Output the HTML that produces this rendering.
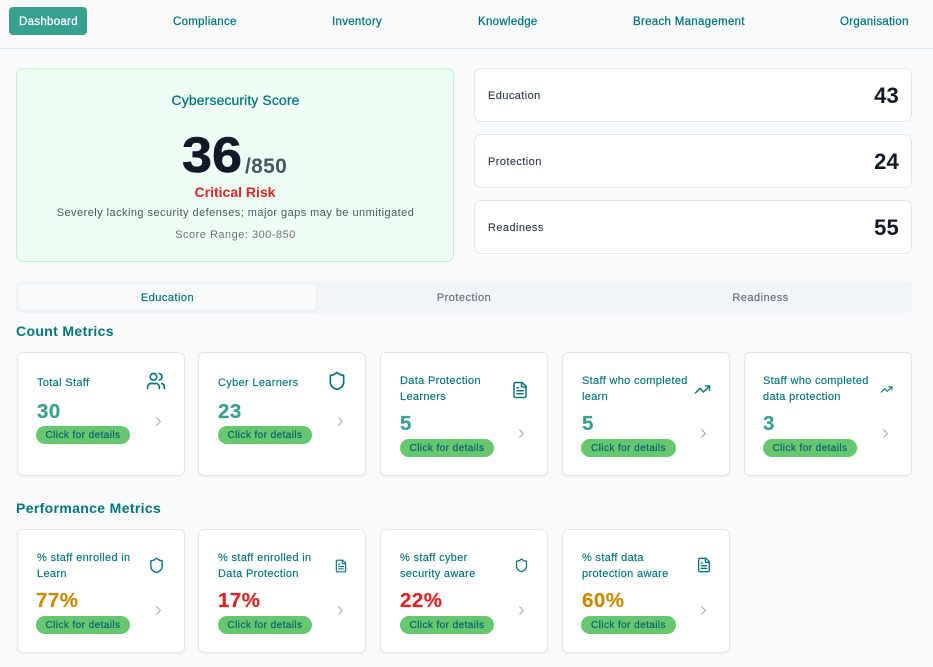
<!DOCTYPE html>
<html><head><meta charset="utf-8"><style>
*{box-sizing:border-box}
html,body{margin:0;padding:0}
body{width:933px;height:667px;position:relative;overflow:hidden;background:#f8fafc;font-family:"Liberation Sans",sans-serif;color:#04747f}
.t{position:absolute;white-space:nowrap;line-height:16px}
.c{transform:translateX(-50%)}
.nav{font-size:11.5px;letter-spacing:.3px;top:14px;-webkit-text-stroke:.25px}
.box{position:absolute;background:#fff;border:1px solid #e2e8f0;border-radius:7px}
.lab{font-size:11px;letter-spacing:.42px;color:#374151;-webkit-text-stroke:.15px}
.num{font-size:22px;font-weight:700;color:#111827;letter-spacing:.2px}
.tab{font-size:11px;letter-spacing:.48px;top:290px;color:#6b7280;-webkit-text-stroke:.2px}
.h{font-size:14px;font-weight:700;letter-spacing:.35px;left:16px}
.card{position:absolute;width:168px;height:124px;background:#fff;border:1px solid #e2e8f0;border-radius:6px;box-shadow:0 1px 2px rgba(0,0,0,.05)}
.m{font-size:11px;letter-spacing:.33px;-webkit-text-stroke:.15px}
.v{font-size:20.5px;font-weight:700;letter-spacing:.5px;color:#38a08e;-webkit-text-stroke:.2px}
.p{position:absolute;height:18px;border-radius:9px;background:#66c76e;color:#0b6173;font-size:10px;letter-spacing:.42px;line-height:19px;text-align:center;white-space:nowrap;-webkit-text-stroke:.2px}
svg.i{position:absolute;fill:none;stroke:#04747f;stroke-width:2;stroke-linecap:round;stroke-linejoin:round}
svg.ch{position:absolute;fill:none;stroke:#9ca3af;stroke-width:1.5;stroke-linecap:round;stroke-linejoin:round}
.a{color:#ca8a04}.r{color:#dc2626}
</style></head><body>
<svg width="0" height="0" style="position:absolute"><defs>
<symbol id="users" viewBox="0 0 24 24"><path d="M16 21v-2a4 4 0 0 0-4-4H6a4 4 0 0 0-4 4v2"/><circle cx="9" cy="7" r="4"/><path d="M22 21v-2a4 4 0 0 0-3-3.87"/><path d="M16 3.13a4 4 0 0 1 0 7.75"/></symbol>
<symbol id="shield" viewBox="0 0 24 24"><path d="M20 13c0 5-3.5 7.5-7.66 8.95a1 1 0 0 1-.67-.01C7.5 20.5 4 18 4 13V6a1 1 0 0 1 1-1c2 0 4.5-1.2 6.24-2.72a1.17 1.17 0 0 1 1.52 0C14.51 3.81 17 5 19 5a1 1 0 0 1 1 1z"/></symbol>
<symbol id="doc" viewBox="0 0 24 24"><path d="M15 2H6a2 2 0 0 0-2 2v16a2 2 0 0 0 2 2h12a2 2 0 0 0 2-2V7Z"/><path d="M14 2v4a2 2 0 0 0 2 2h4"/><path d="M10 9H8"/><path d="M16 13H8"/><path d="M16 17H8"/></symbol>
<symbol id="trend" viewBox="0 0 24 24"><polyline points="22 7 13.5 15.5 8.5 10.5 2 17"/><polyline points="16 7 22 7 22 13"/></symbol>
<symbol id="chev" viewBox="0 0 24 24"><path d="m9 18 6-6-6-6"/></symbol>
</defs></svg>

<div style="position:absolute;left:0;top:48px;width:933px;height:1px;background:#e2e8f0"></div>
<div style="position:absolute;left:9px;top:7px;width:78px;height:28px;background:#38a08e;border-radius:4px"></div>
<div class="t nav" style="left:19px;color:#fff">Dashboard</div>
<div class="t nav" style="left:173px">Compliance</div>
<div class="t nav" style="left:332px">Inventory</div>
<div class="t nav" style="left:478px">Knowledge</div>
<div class="t nav" style="left:633px">Breach Management</div>
<div class="t nav" style="left:840px">Organisation</div>

<div style="position:absolute;left:16px;top:68px;width:438px;height:194px;background:#f0fdf4;border:1px solid #bbf7d0;border-radius:7px"></div>
<div class="t c" style="left:235.5px;top:92px;font-size:14px;letter-spacing:.1px;-webkit-text-stroke:.25px">Cybersecurity Score</div>
<div class="t" style="left:182px;top:125px;font-size:50px;line-height:60px;font-weight:700;color:#111827;-webkit-text-stroke:.6px;transform:scaleX(1.08);transform-origin:0 0">36</div>
<div class="t" style="left:245px;top:155px;font-size:21px;line-height:24px;font-weight:700;color:#4b5563;letter-spacing:.3px">/850</div>
<div class="t c" style="left:235px;top:184px;font-size:14px;font-weight:700;color:#dc2626">Critical Risk</div>
<div class="t c" style="left:235.5px;top:205px;font-size:11px;letter-spacing:.45px;color:#4b5563">Severely lacking security defenses; major gaps may be unmitigated</div>
<div class="t c" style="left:235.5px;top:227px;font-size:11px;letter-spacing:.5px;color:#6b7280">Score Range: 300-850</div>

<div class="box" style="left:474px;top:68px;width:438px;height:54px"></div>
<div class="box" style="left:474px;top:134px;width:438px;height:54px"></div>
<div class="box" style="left:474px;top:200px;width:438px;height:54px"></div>
<div class="t lab" style="left:488px;top:88px">Education</div>
<div class="t lab" style="left:488px;top:154px">Protection</div>
<div class="t lab" style="left:488px;top:220px">Readiness</div>
<div class="t num" style="right:34px;top:88px">43</div>
<div class="t num" style="right:34px;top:154px">24</div>
<div class="t num" style="right:34px;top:220px">55</div>

<div style="position:absolute;left:16px;top:281px;width:896px;height:32px;background:#f1f5f9;border-radius:4px"></div>
<div style="position:absolute;left:19px;top:285px;width:297px;height:25px;background:#f9fafb;border-radius:3px;box-shadow:0 1px 2px rgba(0,0,0,.05)"></div>
<div class="t tab c" style="left:167.5px;color:#04747f">Education</div>
<div class="t tab c" style="left:464px">Protection</div>
<div class="t tab c" style="left:760.5px">Readiness</div>

<div class="t h" style="top:323px">Count Metrics</div>
<div class="card" style="left:17px;top:352px"></div>
<div class="card" style="left:198px;top:352px"></div>
<div class="card" style="left:380px;top:352px"></div>
<div class="card" style="left:562px;top:352px"></div>
<div class="card" style="left:744px;top:352px"></div>

<div class="t m" style="left:37px;top:375px">Total Staff</div>
<div class="t m" style="left:218px;top:375px">Cyber Learners</div>
<div class="t m" style="left:400px;top:373px">Data Protection<br>Learners</div>
<div class="t m" style="left:582px;top:373px">Staff who completed<br>learn</div>
<div class="t m" style="left:763px;top:373px">Staff who completed<br>data protection</div>

<div class="t v" style="left:37px;top:404px">30</div>
<div class="t v" style="left:218px;top:404px">23</div>
<div class="t v" style="left:400px;top:416px">5</div>
<div class="t v" style="left:582px;top:416px">5</div>
<div class="t v" style="left:763px;top:416px">3</div>

<div class="p" style="left:36px;top:426px;width:94px">Click for details</div>
<div class="p" style="left:218px;top:426px;width:94px">Click for details</div>
<div class="p" style="left:400px;top:439px;width:94px">Click for details</div>
<div class="p" style="left:581px;top:439px;width:95px">Click for details</div>
<div class="p" style="left:763px;top:439px;width:94px">Click for details</div>

<svg class="i" style="left:146px;top:371px" width="20" height="20"><use href="#users"/></svg>
<svg class="i" style="left:326.5px;top:371px" width="20" height="20"><use href="#shield"/></svg>
<svg class="i" style="left:511px;top:381px" width="18" height="18"><use href="#doc"/></svg>
<svg class="i" style="left:693.5px;top:381px" width="17" height="17"><use href="#trend"/></svg>
<svg class="i" style="left:879.5px;top:383px" width="13" height="13"><use href="#trend"/></svg>

<svg class="ch" style="left:151px;top:414px" width="15" height="15"><use href="#chev"/></svg>
<svg class="ch" style="left:333px;top:414px" width="15" height="15"><use href="#chev"/></svg>
<svg class="ch" style="left:514px;top:426px" width="15" height="15"><use href="#chev"/></svg>
<svg class="ch" style="left:696px;top:426px" width="15" height="15"><use href="#chev"/></svg>
<svg class="ch" style="left:878px;top:426px" width="15" height="15"><use href="#chev"/></svg>

<div class="t h" style="top:500px">Performance Metrics</div>
<div class="card" style="left:17px;top:529px"></div>
<div class="card" style="left:198px;top:529px"></div>
<div class="card" style="left:380px;top:529px"></div>
<div class="card" style="left:562px;top:529px"></div>

<div class="t m" style="left:37px;top:550px">% staff enrolled in<br>Learn</div>
<div class="t m" style="left:218px;top:550px">% staff enrolled in<br>Data Protection</div>
<div class="t m" style="left:400px;top:550px">% staff cyber<br>security aware</div>
<div class="t m" style="left:582px;top:550px">% staff data<br>protection aware</div>

<div class="t v a" style="left:36px;top:593px">77%</div>
<div class="t v r" style="left:218px;top:593px">17%</div>
<div class="t v r" style="left:400px;top:593px">22%</div>
<div class="t v a" style="left:582px;top:593px">60%</div>

<div class="p" style="left:36px;top:616px;width:94px">Click for details</div>
<div class="p" style="left:218px;top:616px;width:94px">Click for details</div>
<div class="p" style="left:400px;top:616px;width:94px">Click for details</div>
<div class="p" style="left:581px;top:616px;width:95px">Click for details</div>

<svg class="i" style="left:148px;top:556.5px" width="17" height="17"><use href="#shield"/></svg>
<svg class="i" style="left:333.5px;top:558.5px" width="14" height="14"><use href="#doc"/></svg>
<svg class="i" style="left:514px;top:557.5px" width="15" height="15"><use href="#shield"/></svg>
<svg class="i" style="left:696px;top:557px" width="16" height="16"><use href="#doc"/></svg>

<svg class="ch" style="left:151px;top:603px" width="15" height="15"><use href="#chev"/></svg>
<svg class="ch" style="left:333px;top:603px" width="15" height="15"><use href="#chev"/></svg>
<svg class="ch" style="left:514px;top:603px" width="15" height="15"><use href="#chev"/></svg>
<svg class="ch" style="left:696px;top:603px" width="15" height="15"><use href="#chev"/></svg>
</body></html>
